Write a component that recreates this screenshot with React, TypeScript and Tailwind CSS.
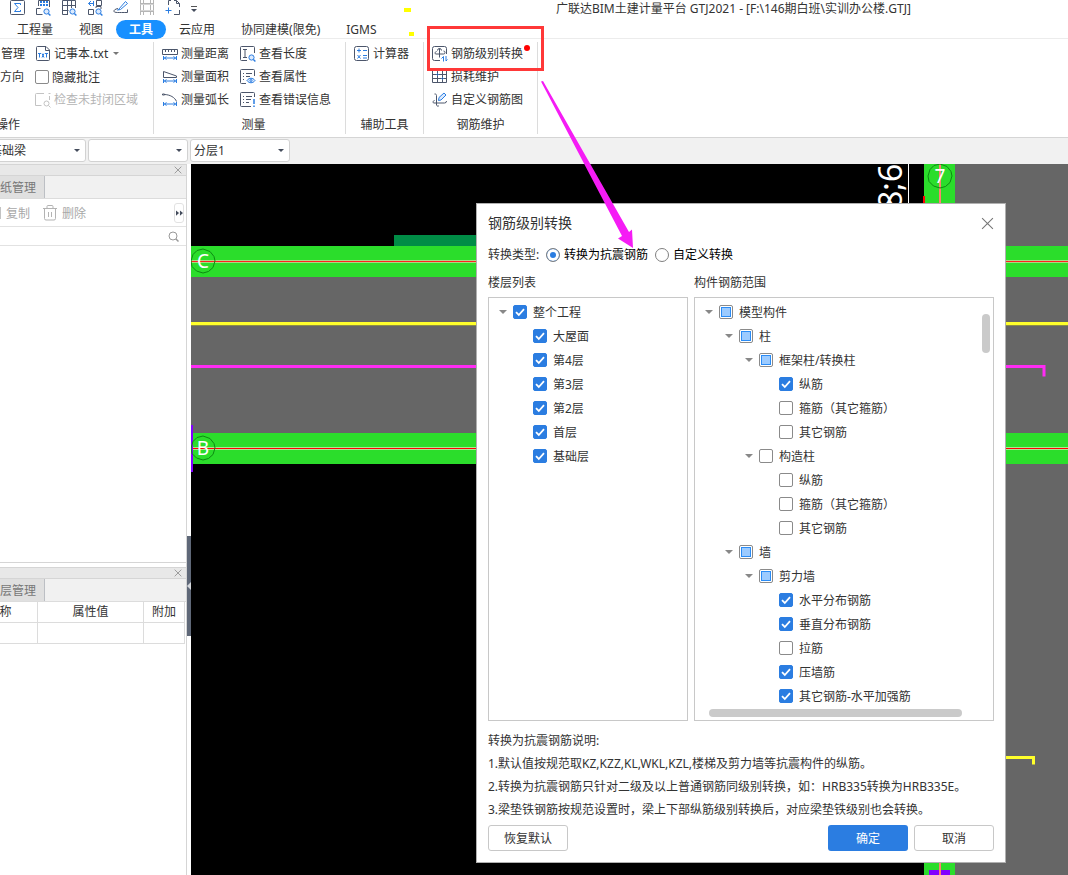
import { useEffect, useRef } from "react";
import type { ReactNode } from "react";

type CheckState = 'on' | 'off' | 'mixed';

interface TreeItem {
    label: string;
    depth: number;
    state: CheckState;
    open?: boolean;
}

const floors: TreeItem[] = [
    { label: '整个工程', depth: 0, state: 'on', open: true },
    { label: '大屋面', depth: 1, state: 'on' },
    { label: '第4层', depth: 1, state: 'on' },
    { label: '第3层', depth: 1, state: 'on' },
    { label: '第2层', depth: 1, state: 'on' },
    { label: '首层', depth: 1, state: 'on' },
    { label: '基础层', depth: 1, state: 'on' },
];

const members: TreeItem[] = [
    { label: '模型构件', depth: 0, state: 'mixed', open: true },
    { label: '柱', depth: 1, state: 'mixed', open: true },
    { label: '框架柱/转换柱', depth: 2, state: 'mixed', open: true },
    { label: '纵筋', depth: 3, state: 'on' },
    { label: '箍筋（其它箍筋）', depth: 3, state: 'off' },
    { label: '其它钢筋', depth: 3, state: 'off' },
    { label: '构造柱', depth: 2, state: 'off', open: true },
    { label: '纵筋', depth: 3, state: 'off' },
    { label: '箍筋（其它箍筋）', depth: 3, state: 'off' },
    { label: '其它钢筋', depth: 3, state: 'off' },
    { label: '墙', depth: 1, state: 'mixed', open: true },
    { label: '剪力墙', depth: 2, state: 'mixed', open: true },
    { label: '水平分布钢筋', depth: 3, state: 'on' },
    { label: '垂直分布钢筋', depth: 3, state: 'on' },
    { label: '拉筋', depth: 3, state: 'off' },
    { label: '压墙筋', depth: 3, state: 'on' },
    { label: '其它钢筋-水平加强筋', depth: 3, state: 'on' },
];

const notes = [
    '转换为抗震钢筋说明:',
    '1.默认值按规范取KZ,KZZ,KL,WKL,KZL,楼梯及剪力墙等抗震构件的纵筋。',
    '2.转换为抗震钢筋只针对二级及以上普通钢筋同级别转换，如：HRB335转换为HRB335E。',
    '3.梁垫铁钢筋按规范设置时，梁上下部纵筋级别转换后，对应梁垫铁级别也会转换。',
];

const tabs = ['工程量', '视图', '工具', '云应用', '协同建模(限免)', 'IGMS'];

const indent = ['pl-2', 'pl-7', 'pl-12', 'pl-[68px]'];

const DARK = '#4c566b';
const BLUE = '#2b7de1';

function Icon({ children, color = DARK }: { children: ReactNode; color?: string }) {
    return (
        <svg viewBox="0 0 16 16" className="size-4 shrink-0" fill="none" stroke={color} aria-hidden="true">
            {children}
        </svg>
    );
}

function Lens({ color = BLUE }: { color?: string }) {
    return (
        <g stroke={color}>
            <circle cx="11.5" cy="11.5" r="2.6" fill="#dbeafe" />
            <path d="M13.4 13.4l2 2" strokeWidth="1.4" />
        </g>
    );
}

function Span() {
    return <path d="M1.500 10v4M14.500 10v4M2 12h12M4.500 10.500L2.500 12l2 1.500M11.500 10.500l2 1.500-2 1.500" stroke={BLUE} />;
}

const icons = {
    sum: (
        <Icon>
            <rect x="1.5" y=".5" width="14" height="14" rx="1" />
            <path d="M11.500 5V3.500H5.500L9 7.500l-3.500 4h6V10" stroke={BLUE} />
        </Icon>
    ),
    calcSearch: (
        <Icon>
            <path d="M3.500 6V.5h11V7M1.500 8.500v6h6M1.500 8.500h4" />
            <path d="M5 2h8M5 5h8" stroke={BLUE} strokeWidth="2" strokeDasharray="2 1" />
            <Lens />
        </Icon>
    ),
    gridSearch: (
        <Icon>
            <path d="M7 14.500H1.500V.5h13V8M1.500 5.500h13M1.500 10.500h6M6.500.5v14M10.500.5V8" />
            <Lens />
        </Icon>
    ),
    swapSearch: (
        <Icon>
            <path d="M9.500.5h5v5h-5zM1.500 9.500h5v5h-5z" />
            <path d="M7 3.500H1.500M4 1L1.500 3.500 4 6M6.500 1v5" stroke={BLUE} />
            <path d="M9 8V6.500h5V9" />
            <Lens />
        </Icon>
    ),
    pencil: (
        <Icon>
            <path d="M5.500 9.500L12.500 1.500l2 2-7 6-3 .5z" stroke={BLUE} />
            <path d="M5 8.500C2 9 .5 10.500 1 11.500c.6 1.300 4 1 13.500 1V9.500" />
        </Icon>
    ),
    film: (
        <Icon color="#b5b5b5">
            <path d="M1.500 0v15M4.500 0v15M11.500 0v15M14.500 0v15M1.500 3.500h13M1.500 11.500h13" />
            <path d="M1.500 4.500h13M1.500 10.500h13" stroke="#d5d5d5" />
        </Icon>
    ),
    frame: (
        <Icon>
            <path d="M3.500 5V.5H6M9 .5h2.500l3 3V7M14.500 10v4.500H9M11.500.5v3h3" />
            <path d="M.5 10.500h6M3.500 7.500v6" stroke={BLUE} />
        </Icon>
    ),
    txt: (
        <Icon>
            <path d="M2.500.5h8.500l3.500 3.500v9.500a1 1 0 0 1-1 1h-11a1 1 0 0 1-1-1v-12a1 1 0 0 1 1-1zM10.500.5v4h4" />
            <path d="M3 7.500h3M4.500 7.500v4M7 7.500l2 4M9 7.500l-2 4M10 7.500h3M11.500 7.500v4" stroke={BLUE} />
        </Icon>
    ),
    region: (
        <Icon color="#c3c3c3">
            <path d="M9 1.500H1.500a1 1 0 0 0-1 1v11h6M14.500 4v4M13.500 1.500h2" />
            <circle cx="11.500" cy="11.500" r="2.500" />
            <path d="M13.500 13.500l2 2" />
        </Icon>
    ),
    distance: (
        <Icon>
            <path d="M.5 3.500h15v5H.5zM3.500 4v2M6.500 4v2M9.500 4v2M12.500 4v2" />
            <Span />
        </Icon>
    ),
    area: (
        <Icon>
            <path d="M1.500 8.500v-6l13 4.500v1.500z" />
            <Span />
        </Icon>
    ),
    arc: (
        <Icon>
            <path d="M2 2.500c6 0 11 3 12.500 7" />
            <path d="M.5 2h2v1h-2z" />
            <Span />
        </Icon>
    ),
    length: (
        <Icon>
            <path d="M7 14.500H1.500a1 1 0 0 1-1-1V1.500a1 1 0 0 1 1-1h12a1 1 0 0 1 1 1V7" />
            <path d="M3 3.500h4M5 3.500v8M3 11.500h4" />
            <Lens />
        </Icon>
    ),
    props: (
        <Icon>
            <path d="M6 14.500H1.500a1 1 0 0 1-1-1V1.500a1 1 0 0 1 1-1h12a1 1 0 0 1 1 1V7M3 4.500h1M6 4.500h6M3 7.500h1M6 7.500h4M3 10.500h1" />
            <path d="M7 11.500c2-3 6-3 8 0-2 3-6 3-8 0z" stroke={BLUE} fill="#dbeafe" />
            <circle cx="11" cy="11.500" r="1" stroke={BLUE} />
        </Icon>
    ),
    errors: (
        <Icon>
            <path d="M11 14.500H1.500a1 1 0 0 1-1-1V1.500a1 1 0 0 1 1-1h12a1 1 0 0 1 1 1V5M3 4.500h1M6 4.500h6M3 7.500h1M6 7.500h5M3 10.500h1M6 10.500h3" />
            <path d="M14 7v5M14 13.500v1.500" stroke={BLUE} strokeWidth="1.500" />
        </Icon>
    ),
    calc: (
        <Icon>
            <rect x=".5" y=".5" width="14" height="14" rx="2" />
            <path d="M3 4.500h4M5 2.500v4M9 4.500h4M3.500 9l3 3.500M6.500 9l-3 3.500M9 9.500h4M9 12h4" stroke={BLUE} />
        </Icon>
    ),
    convert: (
        <Icon>
            <path d="M8 14.500H2.500a2 2 0 0 1-2-2v-10a2 2 0 0 1 2-2h10a2 2 0 0 1 2 2V8" />
            <path d="M7.500 2.500v9M5.500 4.500a2 2 0 0 1 4 0M4.500 5.500a1.500 1.500 0 0 0-1 2.500h8a1.500 1.500 0 0 0 0-3" />
            <path d="M11.500 15.500v-5L9.500 12.500M14 10v5l1.500-1.500" stroke={BLUE} />
        </Icon>
    ),
    loss: (
        <Icon>
            <path d="M.5 1.500h14v12H.5zM.5 5.500h14M.5 9.500h14M5.500 1.500v12M10.500 1.500v12" />
            <path d="M5.500 4.500l1 1-1 1-1-1zM10.500 8.500l1 1-1 1-1-1z" stroke={BLUE} />
        </Icon>
    ),
    draw: (
        <Icon>
            <path d="M4.500 13V3.500a1.500 1.500 0 0 0-2-1.500M2.500 8.500a1.500 1.500 0 0 0-1 2.500h11a2 2 0 0 0 2-2M4.500 12.500c0 2 2 2 2.500 1" />
            <path d="M6.500 8.500L7 5.500 12 1l2 2-5 5z" stroke={BLUE} fill="#dbeafe" />
        </Icon>
    ),
    trash: (
        <Icon color="#b3b3b3">
            <path d="M1 3.500h14M5 3V1.500a1 1 0 0 1 1-1h4a1 1 0 0 1 1 1V3M2.500 4v9.500a1.500 1.500 0 0 0 1.500 1.500h8a1.500 1.500 0 0 0 1.500-1.500V4M6.500 7v5M9.500 7v5" />
        </Icon>
    ),
};

function Caret({ className = 'h-[3px] w-[6px] text-[#444c5c]' }: { className?: string }) {
    return (
        <svg viewBox="0 0 8 4" className={`shrink-0 ${className}`} aria-hidden="true">
            <path d="M0 0h8L4 4z" fill="currentColor" />
        </svg>
    );
}

function Cross({ className }: { className: string }) {
    return (
        <svg viewBox="0 0 12 12" className={className} stroke="currentColor" aria-hidden="true">
            <path d="M1 1l10 10M11 1L1 11" />
        </svg>
    );
}

function CheckBox({ id, state }: { id: string; state: CheckState }) {
    const ref = useRef<HTMLInputElement>(null);

    useEffect(() => {
        if (ref.current) ref.current.indeterminate = state === 'mixed';
    }, [state]);

    return (
        <span className="relative flex size-[14px] shrink-0">
            <input
                ref={ref}
                id={id}
                type="checkbox"
                defaultChecked={state === 'on'}
                className="peer size-[14px] appearance-none rounded-xs border border-[#8a8a8a] bg-white checked:border-[#2b7de1] checked:bg-[#2b7de1]"
            />
            <svg viewBox="0 0 14 14" className="pointer-events-none absolute inset-0 opacity-0 peer-checked:opacity-100" aria-hidden="true">
                <path d="M3 7.200L5.800 10 11 4.200" fill="none" stroke="#fff" strokeWidth="1.800" />
            </svg>
            <span className="pointer-events-none absolute inset-[2px] hidden border border-[#2b8cf5] bg-[#9ccbff] peer-indeterminate:block" />
        </span>
    );
}

function Tree({ name, items }: { name: string; items: TreeItem[] }) {
    return (
        <ul className="pt-[2px]">
            {items.map((item, i) => (
                <li key={i} className={`flex h-6 items-center ${indent[item.depth]}`}>
                    <span className="mr-[5px] flex w-[11px] justify-center">
                        {item.open && <Caret className="h-1 w-2 text-[#888]" />}
                    </span>
                    <CheckBox id={`${name}-${i}`} state={item.state} />
                    <label htmlFor={`${name}-${i}`} className="pt-[2px] pl-[6px] whitespace-nowrap">{item.label}</label>
                </li>
            ))}
        </ul>
    );
}

function Tool({ icon, label }: { icon: ReactNode; label: string }) {
    return (
        <button type="button" className="flex h-[23px] items-center gap-[3px] whitespace-nowrap">
            {icon}
            {label}
        </button>
    );
}

function Group({ title, className = '', children }: { title: string; className?: string; children: ReactNode }) {
    return (
        <section className={`flex h-[92px] shrink-0 flex-col border-r border-[#dcdcdc] ${className}`}>
            <div className="flex h-[72px] shrink-0 items-start gap-[11px]">{children}</div>
            <h2 className="pt-px text-center leading-5">{title}</h2>
        </section>
    );
}

function Ribbon() {
    return (
        <div className="flex h-[99px] items-start overflow-hidden border-b border-[#d5d5d5] bg-white pt-[3px]">
            <section className="flex h-[92px] w-[154px] shrink-0 flex-col border-r border-[#dcdcdc]">
                <div className="flex h-[72px] shrink-0 gap-[10px]">
                    <div className="flex w-[25px] flex-col items-end">
                        <button type="button" className="h-[23px] whitespace-nowrap">管理</button>
                        <button type="button" className="h-[23px] pr-px whitespace-nowrap">方向</button>
                    </div>
                    <div>
                        <button type="button" className="flex h-[23px] items-center gap-[3px] whitespace-nowrap">
                            {icons.txt}
                            记事本.txt
                            <span className="pl-[2px]"><Caret className="h-[3px] w-[6px] text-[#777]" /></span>
                        </button>
                        <div className="flex h-[23px] items-center gap-[3px]">
                            <CheckBox id="hide-notes" state="off" />
                            <label htmlFor="hide-notes" className="pt-[2px]">隐藏批注</label>
                        </div>
                        <button type="button" disabled className="flex h-[23px] items-center gap-[3px] whitespace-nowrap text-[#b5b5b5]">
                            {icons.region}
                            检查未封闭区域
                        </button>
                    </div>
                </div>
                <h2 className="-ml-1 pt-px leading-5 whitespace-nowrap">操作</h2>
            </section>
            <Group title="测量" className="w-[192px] pl-2">
                <div>
                    <Tool icon={icons.distance} label="测量距离" />
                    <Tool icon={icons.area} label="测量面积" />
                    <Tool icon={icons.arc} label="测量弧长" />
                </div>
                <div>
                    <Tool icon={icons.length} label="查看长度" />
                    <Tool icon={icons.props} label="查看属性" />
                    <Tool icon={icons.errors} label="查看错误信息" />
                </div>
            </Group>
            <Group title="辅助工具" className="w-[78px] px-2">
                <Tool icon={icons.calc} label="计算器" />
            </Group>
            <Group title="钢筋维护" className="w-[114px] px-2">
                <div>
                    <Tool icon={icons.convert} label="钢筋级别转换" />
                    <Tool icon={icons.loss} label="损耗维护" />
                    <Tool icon={icons.draw} label="自定义钢筋图" />
                </div>
            </Group>
        </div>
    );
}

function Combo({ label, value, className = '' }: { label: string; value: string; className?: string }) {
    return (
        <div className={`relative w-[100px] shrink-0 ${className}`}>
            <select aria-label={label} className="h-[23px] w-full appearance-none rounded-[3px] border border-[#d2d2d2] bg-white pl-[3px]">
                <option>{value}</option>
            </select>
            <span className="pointer-events-none absolute top-[10px] right-[6px]">
                <Caret />
            </span>
        </div>
    );
}

function PanelHead({ title }: { title: string }) {
    return (
        <>
            <div className="flex h-3 shrink-0 items-center justify-end border-y border-[#d5d5d5] bg-[#e8e8e8] pr-1">
                <button type="button" aria-label="关闭"><Cross className="size-2 text-[#777]" /></button>
            </div>
            <div className="flex h-[23px] shrink-0 border-b border-[#dcdcdc] bg-[#f1f1f1]">
                <button type="button" className="-ml-5 w-[65px] border-r border-[#bcbfc4] bg-[#e0e0e0] pt-[2px] whitespace-nowrap text-[#777]">
                    {title}
                </button>
            </div>
        </>
    );
}

function SidePanels() {
    return (
        <aside className="flex w-[187px] shrink-0 flex-col overflow-hidden border-r border-[#d5d5d5] bg-white">
            <div className="flex h-[399px] shrink-0 flex-col border-b border-[#d5d5d5]">
                <PanelHead title="图纸管理" />
                <div className="flex h-7 items-center border-b border-[#e2e2e2] text-[#a8a8a8]">
                    <span className="h-3 w-px bg-[#c3c3c3]" />
                    <button type="button" className="pt-[2px] pl-[5px]">复制</button>
                    <button type="button" className="flex items-center gap-1 pl-3">
                        {icons.trash}
                        <span className="pt-[2px]">删除</span>
                    </button>
                    <button type="button" aria-label="更多" className="mr-[2px] ml-auto flex h-5 w-[10px] items-center justify-center rounded-[3px] border border-[#e2e2e2]">
                        <svg viewBox="0 0 8 6" className="h-[6px] w-[7px] shrink-0" fill="#444c5c">
                            <path d="M0 0l3.500 3L0 6zM4.500 0L8 3 4.500 6z" />
                        </svg>
                    </button>
                </div>
                <div className="flex h-[19px] items-center border-b border-[#e2e2e2] pr-[7px]">
                    <input type="text" aria-label="搜索图纸" className="min-w-0 flex-1 outline-none" />
                    <svg viewBox="0 0 11 11" className="size-[11px]" fill="none" stroke="#999">
                        <circle cx="5" cy="5" r="4" />
                        <path d="M8 8l2.500 2.500" strokeWidth="1.500" />
                    </svg>
                </div>
            </div>
            <div className="mt-1">
                <PanelHead title="图层管理" />
                <table className="-ml-[39px] w-[224px] table-fixed border-collapse">
                    <thead>
                        <tr className="h-5">
                            <th className="w-[76px] border border-t-0 border-[#dcdcdc] pt-px font-normal">名称</th>
                            <th className="w-[106px] border border-t-0 border-[#dcdcdc] pt-px font-normal">属性值</th>
                            <th className="border border-t-0 border-[#dcdcdc] pt-px font-normal">附加</th>
                        </tr>
                    </thead>
                    <tbody>
                        <tr className="h-[21px]">
                            <td className="border border-[#dcdcdc]" />
                            <td className="border border-[#dcdcdc]" />
                            <td className="border border-[#dcdcdc]" />
                        </tr>
                    </tbody>
                </table>
            </div>
        </aside>
    );
}

function AxisMark({ x, y, label }: { x: number; y: number; label: string }) {
    return (
        <g>
            <path
                transform={`translate(${x} ${y})`}
                d="M0-12L7-9.500 11-4.500 12 0 10 6.500 5.500 10.500 0 12-6.500 10-11 5.500-12 0-10-6.500-6-10.500z"
                fill="none"
                stroke="#0c8a12"
            />
            <text x={x} y={y + 7} textAnchor="middle" fontSize="19" fill="#fff">{label}</text>
        </g>
    );
}

function Drawing() {
    return (
        <svg viewBox="191 164 877 711" preserveAspectRatio="xMinYMin slice" className="absolute inset-0 size-full">
            <rect x="191" y="164" width="877" height="711" fill="#000" />
            <rect x="191" y="277" width="877" height="156" fill="#666" />
            <rect x="955" y="164" width="113" height="711" fill="#666" />
            <rect x="394" y="235" width="120" height="11" fill="#008c46" />
            <rect x="924" y="164" width="31" height="711" fill="#2bdd2b" />
            <rect x="191" y="246" width="877" height="31" fill="#2bdd2b" />
            <rect x="191" y="433" width="877" height="31" fill="#2bdd2b" />
            <rect x="191" y="260" width="877" height="3" fill="#a9d884" />
            <rect x="191" y="261" width="877" height="1" fill="#ff2020" />
            <rect x="191" y="447" width="877" height="3" fill="#a9e894" />
            <rect x="191" y="448" width="877" height="1" fill="#ff0000" />
            <rect x="191" y="322" width="877" height="4" fill="#8c8c48" />
            <rect x="191" y="322" width="877" height="3" fill="#ffff2b" />
            <path d="M191 366.500h853v10" fill="none" stroke="#ff2bf5" strokeWidth="3" />
            <path d="M1000 757.500h33.500v7" fill="none" stroke="#ffff2b" strokeWidth="3" />
            <rect x="191" y="425" width="2" height="47" fill="#8000ff" />
            <rect x="929" y="870" width="21" height="5" fill="#8000ff" />
            <rect x="939" y="164" width="2" height="711" fill="#ff8070" />
            <rect x="923" y="196" width="2" height="12" fill="#ff0000" />
            <rect x="908" y="164" width="1" height="60" fill="#fff" />
            <text transform="translate(902 209) rotate(-90)" fontSize="32" fill="#fff">8;6</text>
            <AxisMark x={203} y={261} label="C" />
            <AxisMark x={203} y={448} label="B" />
            <AxisMark x={940} y={176} label="7" />
        </svg>
    );
}

function ConvertDialog() {
    return (
        <div role="dialog" aria-labelledby="convert-title" className="absolute top-[203px] left-[476px] w-[530px] border border-[#b0b0b0] bg-white px-[11px] pb-[11px]">
            <div className="flex h-[38px] items-center justify-between">
                <h1 id="convert-title" className="text-sm">钢筋级别转换</h1>
                <button type="button" aria-label="关闭"><Cross className="size-[13px] text-[#777]" /></button>
            </div>
            <fieldset className="flex h-[25px] items-center">
                <span className="w-[58px]">转换类型:</span>
                <label className="mr-[7px] flex items-center gap-1 text-black">
                    <input type="radio" name="mode" defaultChecked className="size-[14px] appearance-none rounded-full border border-[#808080] shadow-[inset_0_0_0_3px_white] checked:bg-[#2b7de1]" />
                    转换为抗震钢筋
                </label>
                <label className="flex items-center gap-1 text-black">
                    <input type="radio" name="mode" className="size-[14px] appearance-none rounded-full border border-[#808080] shadow-[inset_0_0_0_3px_white] checked:bg-[#2b7de1]" />
                    自定义转换
                </label>
            </fieldset>
            <div className="flex gap-[6px]">
                <div className="w-[200px]">
                    <h2 className="pt-[2px] leading-7">楼层列表</h2>
                    <div className="h-[424px] border border-[#c8c8c8]">
                        <Tree name="floor" items={floors} />
                    </div>
                </div>
                <div className="flex-1">
                    <h2 className="pt-[2px] leading-7">构件钢筋范围</h2>
                    <div className="relative h-[424px] overflow-hidden border border-[#c8c8c8]">
                        <Tree name="member" items={members} />
                        <span className="absolute top-4 right-[3px] h-[39px] w-2 rounded-full bg-[#cacaca]" />
                        <span className="absolute bottom-[3px] left-[14px] h-2 w-[253px] rounded-full bg-[#cacaca]" />
                    </div>
                </div>
            </div>
            <div className="mt-2 leading-[23px]">
                {notes.map((line) => (
                    <p key={line} className="whitespace-nowrap">{line}</p>
                ))}
            </div>
            <div className="mt-1 flex gap-[6px]">
                <button type="button" className="mr-auto h-[26px] w-20 rounded-[3px] border border-[#c8c8c8] pt-[2px]">恢复默认</button>
                <button type="button" className="h-[26px] w-20 rounded-[3px] bg-[#2b7de1] pt-[2px] text-white">确定</button>
                <button type="button" className="h-[26px] w-20 rounded-[3px] border border-[#c8c8c8] pt-[2px]">取消</button>
            </div>
        </div>
    );
}

// red frame, yellow ticks and the arrow drawn over the window
function Annotations() {
    return (
        <div className="pointer-events-none absolute inset-0 overflow-hidden">
            <span className="absolute top-2 left-[404px] h-1 w-[7px] bg-[#ffff00]" />
            <span className="absolute top-8 left-[409px] h-1 w-[5px] bg-[#ffff00]" />
            <span className="absolute top-[26px] left-[427px] h-[45px] w-[117px] border-3 border-[#ff3838]" />
            <span className="absolute top-[45px] left-[524px] size-[6px] rounded-full bg-[#ff0000]" />
            <svg viewBox="0 0 100 170" className="absolute top-20 left-[540px] h-[170px] w-[100px]">
                <path d="M1 1.500l2-.5 86 151 3-2.500L93 168l-15-9.500 4-2.500z" fill="#f51cf5" />
            </svg>
        </div>
    );
}

export default function App() {
    return (
        <div className="relative flex h-screen flex-col overflow-hidden bg-white font-['Noto_Sans','Noto_Sans_CJK_SC',sans-serif] text-xs text-[#333]">
            <header className="shrink-0">
                <div className="flex h-[18px] items-center">
                    <div className="flex items-start gap-[10px] pb-[2px] pl-[9px]">
                        <button type="button" aria-label="汇总计算">{icons.sum}</button>
                        <button type="button" aria-label="查看计算式">{icons.calcSearch}</button>
                        <button type="button" aria-label="查看报表">{icons.gridSearch}</button>
                        <button type="button" aria-label="查看工程量">{icons.swapSearch}</button>
                        <button type="button" aria-label="编辑">{icons.pencil}</button>
                        <button type="button" aria-label="钢筋三维">{icons.film}</button>
                        <button type="button" aria-label="选择">{icons.frame}</button>
                    </div>
                    <button type="button" aria-label="自定义快速访问" className="ml-[10px] flex flex-col items-center gap-[2px]">
                        <span className="h-px w-[6px] bg-[#555]" />
                        <Caret />
                    </button>
                    <span className="ml-[359px] whitespace-nowrap">广联达BIM土建计量平台 GTJ2021 - [F:\146期白班\实训办公楼.GTJ]</span>
                </div>
                <nav className="flex h-[21px] items-end border-b border-[#ececec] pl-1">
                    {tabs.map((tab) => (
                        <button
                            key={tab}
                            type="button"
                            className={`-mb-px h-[19px] rounded-full px-[13px] whitespace-nowrap ${tab === '工具' ? 'bg-[#1890ff] font-bold text-white' : ''}`}
                        >
                            {tab}
                        </button>
                    ))}
                </nav>
                <Ribbon />
                <div className="flex h-[26px] gap-[2px] bg-[#f1f1f1] pt-px">
                    <Combo label="构件类型" value="基础梁" className="-ml-[14px]" />
                    <Combo label="构件" value="" />
                    <Combo label="分层" value="分层1" />
                </div>
            </header>
            <main className="flex min-h-0 flex-1">
                <SidePanels />
                <div className="flex w-1 shrink-0 items-center bg-white">
                    <button type="button" aria-label="收起" className="mt-[133px] flex h-[100px] w-1 items-center bg-[#5f6878]">
                        <svg viewBox="0 0 4 8" className="h-2 w-1"><path d="M4 0v8L0 4z" fill="#d5d8dd" /></svg>
                    </button>
                </div>
                <div className="relative min-w-0 flex-1 bg-black">
                    <Drawing />
                </div>
            </main>
            <ConvertDialog />
            <Annotations />
        </div>
    );
}
